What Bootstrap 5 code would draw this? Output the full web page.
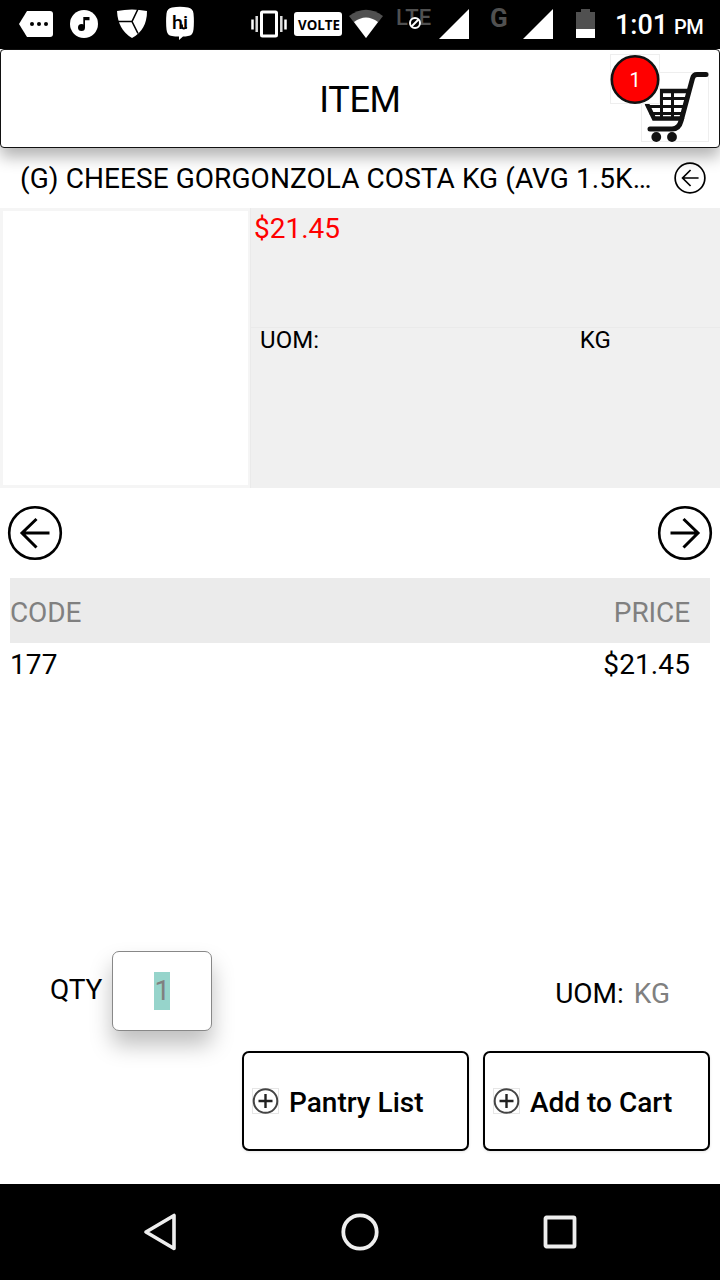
<!DOCTYPE html>
<html lang="en">
<head>
<meta charset="utf-8">
<meta name="viewport" content="width=device-width, initial-scale=1">
<title>Item</title>
<link href="https://cdn.jsdelivr.net/npm/bootstrap@5.3.0/dist/css/bootstrap.min.css" rel="stylesheet">
<style>
  body { font-family: Roboto, "Liberation Sans", sans-serif; font-size: 28px; line-height: 33px; color: #000; background: #fff; }
  svg { display: block; flex: none; }
  .screen { width: 720px; height: 1280px; }
  .statusbar { height: 49px; padding-left: 19px; }
  .volte { width: 48px; height: 24px; margin: 12px 7px 0; border-radius: 3px; }
  .net { color: #505050; font-weight: 500; line-height: 20px; }
  .net-lte { width: 37px; margin: 8px 6px 0 13px; font-size: 22px; letter-spacing: .1px; }
  .net-lte svg { left: 12px; top: 8px; }
  .net-g { width: 20px; margin: 7px 13px 0 21px; font-size: 26px; font-weight: 700; line-height: 22px; }
  .clock { margin: 9px 0 0 20px; font-weight: 500; font-size: 27px; white-space: nowrap; }
  .clock span { font-size: 20px; margin-left: -1px; letter-spacing: -.4px; }
  .titlebar { height: 99px; padding-top: 3px; border: 1px solid #111; border-radius: 4px; font-size: 36px; letter-spacing: -.3px; box-shadow: 0 9px 16px rgba(0,0,0,.3); z-index: 2; }
  .cart { right: 0; top: 0; letter-spacing: 0; }
  .item-name { height: 60px; padding: 0 14px 0 20px; }
  .item-name .text-nowrap { letter-spacing: .07px; }
  .detail { height: 280px; background: #f0f0f0; }
  .photo { width: 250px; border: 3px solid #f5f5f5; border-right-width: 2px; background: #fff; }
  .info { border-left: 1px solid #eaeaea; }
  .price { height: 120px; padding: 4px 0 0 3px; color: #ff0000; border-bottom: 1px solid #eaeaea; }
  .unit { padding: 0 109px 0 9px; font-size: 24px; line-height: 25px; letter-spacing: .1px; }
  .pager { height: 90px; padding: 0 7px; }
  .table-head { height: 65px; margin: 0 10px; padding: 4px 20px 0 0; background: #ebebeb; color: #808080; letter-spacing: -.1px; }
  .table-line { height: 42px; margin: 0 10px; padding-right: 20px; letter-spacing: .1px; }
  .order { height: 80px; margin-top: 266px; padding: 0 50px; }
  .qty-box { width: 100px; height: 80px; margin-left: 10px; border: 1px solid #888; border-radius: 7px; background: #fff; color: #808080; box-shadow: 0 14px 22px rgba(0,0,0,.25); }
  .qty-box span { background: #96d4cb; line-height: 38px; width: 16px; }
  .muted-txt { color: #808080; margin-left: 10px; }
  .actions { margin-top: 20px; padding-right: 10px; gap: 14px; }
  .btn.act { width: 227px; height: 100px; padding: 2px 8px 0; border: 2px solid #000; border-radius: 7px; background: #fff; color: #000; font-size: 28px; font-weight: 500; line-height: 33px; box-shadow: 0 1px 3px rgba(0,0,0,.1); }
  .act svg { margin: -3px 10px 0 0; }
  .navkeys { height: 96px; padding: 0 142px; }
</style>
</head>
<body>
<div class="screen d-flex flex-column position-relative overflow-hidden">

  <div class="statusbar bg-black text-white d-flex align-items-start flex-shrink-0">
    <svg width="34" height="49"><path d="M8 11h23q3 0 3 3v20q0 3-3 3H8L0 24z" fill="#fff"/><g><circle cx="13" cy="24" r="2"/><circle cx="20" cy="24" r="2"/><circle cx="27" cy="24" r="2"/></g></svg>
    <svg width="28" height="49" style="margin-left:17px"><circle cx="14" cy="24" r="14" fill="#fff"/><circle cx="11.500" cy="27.500" r="3.500"/><path d="M13.300 17H19.500v3.200h-4.500v7.300h-1.700z"/></svg>
    <svg width="30" height="49" style="margin-left:19px"><path d="M0 11q15-3 30 0 0 19-15 27Q1 30 0 11z" fill="#fff"/><path d="M1 21.500h14L21 9M15 21.500l6 12" fill="none" stroke="#000" stroke-width="1.600"/></svg>
    <svg width="28" height="49" style="margin-left:19px"><path d="M6 7.500Q14 6 22 7.500q5 1 5.500 6 .8 8 0 16-.5 6-5.500 6.500-2.500.500-5 .5l-4 3.500v-3.500q-4 0-7-.500-5-.500-5.500-6.500-.8-8 0-16 .500-5 5.500-6z" fill="#fff"/><text x="6" y="28.500" font-family="Roboto" font-size="19" font-weight="500" textLength="16" lengthAdjust="spacingAndGlyphs">hi</text><path d="M16 24.500v2q0 2 2 2t2.500-1.500" fill="none" stroke="#000" stroke-width="1.800"/></svg>
    <svg width="36" height="49" style="margin-left:57px"><rect x="10.500" y="12" width="15" height="24" rx="1" fill="none" stroke="#fff" stroke-width="3"/><path d="M1.500 19.500v10M34.500 19.500v10" stroke="#fff" stroke-width="2.500"/><path d="M5.700 16v16M30.300 16v16" stroke="#ddd" stroke-width="2.500"/></svg>
    <div class="volte bg-white text-black"><svg width="48" height="24"><text x="4" y="17.500" font-family="Open Sans" font-size="15" font-weight="700" textLength="42" lengthAdjust="spacingAndGlyphs">VOLTE</text></svg></div>
    <svg width="34" height="49"><path d="M17 38L0 16q17-12.500 34 0z" fill="#505050"/><path d="M17 38L5 22q12-9 24 0z" fill="#fff"/></svg>
    <div class="net net-lte position-relative">LTE<svg class="position-absolute" width="14" height="14"><circle cx="7" cy="7" r="5" fill="#000" stroke="#fff" stroke-width="2"/><path d="M3.500 10.500l7-7" stroke="#fff" stroke-width="2"/></svg></div>
    <svg width="30" height="49"><path d="M30 9v30H0z" fill="#fff"/></svg>
    <div class="net net-g">G</div>
    <svg width="30" height="49"><path d="M30 9v30H0z" fill="#fff"/></svg>
    <svg width="19" height="49" style="margin-left:23px"><path d="M5 9h9v3h5v17H0V12h5z" fill="#505050"/><path d="M0 29h19v9H0z" fill="#fff"/></svg>
    <div class="clock">1:01 <span>PM</span></div>
  </div>

  <header class="titlebar bg-white d-flex align-items-center justify-content-center flex-shrink-0 position-relative">
    ITEM
    <svg class="cart position-absolute" width="110" height="97" viewBox="609 50 110 97">
      <rect x="641.500" y="72.500" width="67" height="69" fill="#fff" stroke="#eee"/>
      <g fill="none" stroke="#111" stroke-linecap="round">
        <path d="M706 74.500h-9q-3.500 0-4.500 4L681 121q-2 8-9 8h-22" stroke-width="5"/>
        <path d="M645 91h43M647 104l7 14.500h28" stroke-width="4.500"/>
        <path d="M650 98.500h36M648 106.500h36M651 113.500h32M661.500 91v27M672.500 91v27" stroke-width="3"/>
      </g>
      <circle cx="656.300" cy="137" r="4.900" fill="#111"/><circle cx="672" cy="137" r="4.900" fill="#111"/>
      <rect x="610.500" y="54.500" width="49" height="49" fill="#fff" stroke="#eee"/>
      <circle cx="635" cy="79.500" r="23.200" fill="#f00" stroke="#111" stroke-width="2.600"/>
      <text x="635" y="87" font-family="Roboto" font-size="20" fill="#fff" text-anchor="middle">1</text>
    </svg>
  </header>

  <div class="item-name d-flex align-items-center justify-content-between flex-shrink-0">
    <div class="text-nowrap">(G) CHEESE GORGONZOLA COSTA KG (AVG 1.5K…</div>
    <svg width="32" height="32" viewBox="0 0 56 56" fill="none" stroke="#000" stroke-width="3"><circle cx="28" cy="28" r="26"/><path d="M43 28H15M29 14L15 28l14 14"/></svg>
  </div>

  <section class="detail d-flex flex-shrink-0">
    <div class="photo"></div>
    <div class="info flex-grow-1">
      <div class="price">$21.45</div>
      <div class="unit d-flex justify-content-between"><span>UOM:</span><span>KG</span></div>
    </div>
  </section>

  <div class="pager d-flex align-items-center justify-content-between flex-shrink-0">
    <svg width="56" height="56" fill="none" stroke="#000" stroke-width="2.600"><circle cx="28" cy="28" r="25.800"/><path d="M42.500 28H15M29.500 14L15 28l14.500 14.500" stroke-width="3"/></svg>
    <svg width="56" height="56" fill="none" stroke="#000" stroke-width="2.600"><circle cx="28" cy="28" r="25.800"/><path d="M13.500 28H41M26.500 14L41 28 26.500 42.500" stroke-width="3"/></svg>
  </div>

  <div class="table-head d-flex align-items-center justify-content-between flex-shrink-0"><span>CODE</span><span>PRICE</span></div>
  <div class="table-line d-flex align-items-center justify-content-between flex-shrink-0"><span>177</span><span>$21.45</span></div>

  <div class="order d-flex align-items-center justify-content-between flex-shrink-0">
    <div class="d-flex align-items-center"><span class="pb-1">QTY</span>
      <div class="qty-box d-flex align-items-center justify-content-center"><span>1</span></div>
    </div>
    <div class="d-flex pt-1"><span>UOM:</span><span class="muted-txt">KG</span></div>
  </div>

  <div class="actions d-flex justify-content-end flex-shrink-0">
    <button type="button" class="btn act d-flex align-items-center"><svg width="27" height="26"><rect x=".5" y=".5" width="26" height="25" fill="none" stroke="#e6e6e6"/><circle cx="13.500" cy="13" r="11.800" fill="#fff" stroke="#444" stroke-width="2"/><path d="M6.500 13h14M13.500 6v14" stroke="#222" stroke-width="2.400"/></svg>Pantry List</button>
    <button type="button" class="btn act d-flex align-items-center"><svg width="27" height="26"><rect x=".5" y=".5" width="26" height="25" fill="none" stroke="#e6e6e6"/><circle cx="13.500" cy="13" r="11.800" fill="#fff" stroke="#444" stroke-width="2"/><path d="M6.500 13h14M13.500 6v14" stroke="#222" stroke-width="2.400"/></svg>Add to Cart</button>
  </div>

  <nav class="navkeys bg-black d-flex align-items-center justify-content-between mt-auto flex-shrink-0">
    <svg width="36" height="40" fill="none" stroke="#eee" stroke-width="3.600" stroke-linejoin="round"><path d="M32 3.500v33L4 20z"/></svg>
    <svg width="40" height="40" fill="none" stroke="#eee" stroke-width="3.800"><circle cx="20" cy="20" r="16.700"/></svg>
    <svg width="36" height="40" fill="none" stroke="#eee" stroke-width="3.800"><rect x="3.500" y="5.500" width="29" height="29" rx="1"/></svg>
  </nav>
</div>
<script src="https://cdn.jsdelivr.net/npm/bootstrap@5.3.0/dist/js/bootstrap.bundle.min.js"></script>
</body>
</html>
